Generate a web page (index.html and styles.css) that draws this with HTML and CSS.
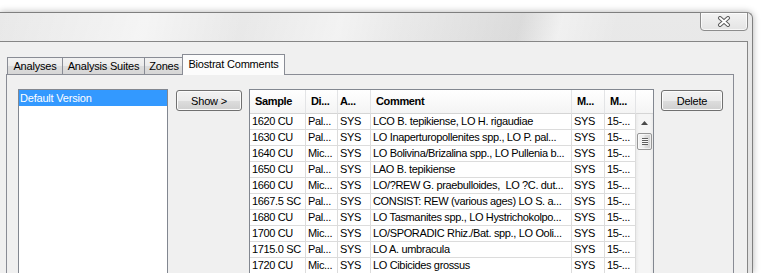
FILE: index.html
```html
<!DOCTYPE html>
<html lang="en">
  <head>
    <meta charset="UTF-8" />
    <title>Biostrat Comments</title>
    <link rel="stylesheet" href="styles.css">
  </head>
  <body>
    <div class="desktop">
      <div class="window">
        <div class="titlebar">
          <button class="close-btn" type="button">
            <svg width="14" height="11" viewBox="0 0 14 11">
              <path d="M3 2 L11 9 M11 2 L3 9" stroke="#5c5c5c" stroke-width="4" stroke-linecap="round" fill="none"/>
              <path d="M3 2 L11 9 M11 2 L3 9" stroke="#ffffff" stroke-width="2" stroke-linecap="round" fill="none"/>
            </svg>
          </button>
        </div>

        <div class="client">
          <div class="tab-strip">
            <span class="tab tab-analyses">Analyses</span>
            <span class="tab tab-suites">Analysis Suites</span>
            <span class="tab tab-zones">Zones</span>
            <span class="tab tab-comments active">Biostrat Comments</span>
          </div>

          <div class="tab-pane">
            <div class="version-list">
              <div class="list-item selected">Default Version</div>
            </div>

            <button class="btn show-btn" type="button">Show &gt;</button>

            <div class="grid-box">
              <div class="grid">
                <div class="th">Sample</div>
                <div class="th">Di...</div>
                <div class="th th-tight">A...</div>
                <div class="th">Comment</div>
                <div class="th">M...</div>
                <div class="th">M...</div>

                <div class="td">1620 CU</div><div class="td">Pal...</div><div class="td">SYS</div><div class="td">LCO B. tepikiense, LO H. rigaudiae</div><div class="td">SYS</div><div class="td">15-...</div>
                <div class="td">1630 CU</div><div class="td">Pal...</div><div class="td">SYS</div><div class="td">LO Inaperturopollenites spp., LO P. pal...</div><div class="td">SYS</div><div class="td">15-...</div>
                <div class="td">1640 CU</div><div class="td">Mic...</div><div class="td">SYS</div><div class="td">LO Bolivina/Brizalina spp., LO Pullenia b...</div><div class="td">SYS</div><div class="td">15-...</div>
                <div class="td">1650 CU</div><div class="td">Pal...</div><div class="td">SYS</div><div class="td">LAO B. tepikiense</div><div class="td">SYS</div><div class="td">15-...</div>
                <div class="td">1660 CU</div><div class="td">Mic...</div><div class="td">SYS</div><div class="td">LO/?REW G. praebulloides,&nbsp; LO ?C. dut...</div><div class="td">SYS</div><div class="td">15-...</div>
                <div class="td">1667.5 SC</div><div class="td">Pal...</div><div class="td">SYS</div><div class="td">CONSIST: REW (various ages) LO S. a...</div><div class="td">SYS</div><div class="td">15-...</div>
                <div class="td">1680 CU</div><div class="td">Pal...</div><div class="td">SYS</div><div class="td">LO Tasmanites spp., LO Hystrichokolpo...</div><div class="td">SYS</div><div class="td">15-...</div>
                <div class="td">1700 CU</div><div class="td">Mic...</div><div class="td">SYS</div><div class="td">LO/SPORADIC Rhiz./Bat. spp., LO Ooli...</div><div class="td">SYS</div><div class="td">15-...</div>
                <div class="td">1715.0 SC</div><div class="td">Pal...</div><div class="td">SYS</div><div class="td">LO A. umbracula</div><div class="td">SYS</div><div class="td">15-...</div>
                <div class="td">1720 CU</div><div class="td">Mic...</div><div class="td">SYS</div><div class="td">LO Cibicides grossus</div><div class="td">SYS</div><div class="td">15-...</div>
              </div>

              <div class="scroll-side">
                <div class="corner"></div>
                <div class="scrollbar">
                  <div class="arrow-up">
                    <svg width="7" height="4" viewBox="0 0 7 4"><polygon points="0,4 3.5,0 7,4" fill="#4a4a4a"/></svg>
                  </div>
                  <div class="thumb"><span class="grip"></span></div>
                </div>
              </div>
            </div>

            <button class="btn delete-btn" type="button">Delete</button>
          </div>
        </div>
      </div>
    </div>
  </body>
</html>
```

FILE: styles.css
```css
* {
  box-sizing: border-box;
}

html, body {
  margin: 0;
  height: 100%;
}

body {
  background: #fff;
  font-family: "Liberation Sans", Arial, sans-serif;
  font-size: 11px;
  letter-spacing: -0.2px;
  color: #000;
  overflow: hidden;
}

/* page area around the dialog, window sits 12px down and stops 15px from the right */
.desktop {
  height: 273px;
  padding: 12px 15px 0 0;
}

.window {
  height: 100%;
  display: flex;
  flex-direction: column;
  padding-right: 4px;
  border-top: 1px solid #7f7f7f;
  border-right: 1px solid #7f7f7f;
  border-top-right-radius: 6px;
  box-shadow: 0 0 7px rgba(0, 0, 0, 0.3);
  background:
    linear-gradient(104deg, rgba(255,255,255,0) 0%, rgba(255,255,255,0.55) 18%, rgba(255,255,255,0) 30%,
      rgba(255,255,255,0.45) 42%, rgba(0,0,0,0) 50%, rgba(0,0,0,0.06) 64%, rgba(255,255,255,0.35) 69%, rgba(0,0,0,0) 76%),
    linear-gradient(#e9e9e9, #e2e2e2);
}

.titlebar {
  flex: none;
  height: 28px;
  display: flex;
  justify-content: flex-end;
}

.close-btn {
  width: 48px;
  height: 19px;
  margin-top: -1px;
  padding: 0;
  display: flex;
  align-items: center;
  justify-content: center;
  border: 1px solid #8c8c8c;
  border-radius: 0 0 4px 4px;
  background: linear-gradient(#f3f3f3, #e4e4e4);
  box-shadow: inset 0 0 0 1px rgba(255, 255, 255, 0.7);
}

.client {
  flex: 1;
  min-height: 0;
  display: flex;
  flex-direction: column;
  border-top: 1px solid #868686;
  border-right: 1px solid #868686;
  background: #f0f0f0;
}

/* tabs */
.tab-strip {
  flex: none;
  height: 20px;
  margin: 12px 0 0 7px;
  display: flex;
  align-items: flex-end;
}

.tab {
  height: 17px;
  margin-left: -1px;
  line-height: 16px;
  text-align: center;
  white-space: nowrap;
  border: 1px solid #898c95;
  border-bottom: none;
  background: linear-gradient(#f2f2f2, #ebebeb 50%, #dddddd 51%, #d6d6d6);
}

.tab-analyses { width: 56px; margin-left: 0; }
.tab-suites { width: 83px; }
.tab-zones { width: 40px; }

.tab.active {
  position: relative;
  z-index: 1;
  width: 103px;
  height: 21px;
  margin-left: -2px;
  margin-bottom: -1px;
  padding-top: 1px;
  background: #fcfcfc;
}

.tab-pane {
  flex: none;
  height: 320px;
  margin: 0 13px 0 6px;
  padding: 14px 0 0 11px;
  display: flex;
  align-items: flex-start;
  border: 1px solid #898c95;
  background: #f0f0f0;
}

.version-list {
  width: 150px;
  height: 300px;
  border: 1px solid #828790;
  background: #fff;
}

.list-item {
  height: 16px;
  line-height: 16px;
  padding-left: 1px;
}

.list-item.selected {
  background: #3399ff;
  color: #fff;
}

/* windows 7 style push buttons */
.btn {
  height: 21px;
  margin-top: 1px;
  padding: 0;
  font: inherit;
  letter-spacing: inherit;
  color: #000;
  border: 1px solid #707070;
  border-radius: 3px;
  background: linear-gradient(#f2f2f2, #ebebeb 50%, #dddddd 51%, #cfcfcf);
  box-shadow: inset 0 0 0 1px #fbfbfb;
}

.show-btn {
  width: 66px;
  margin-left: 8px;
}

.delete-btn {
  width: 62px;
  margin-left: 7px;
}

/* table */
.grid-box {
  width: 405px;
  height: 300px;
  margin-left: 7px;
  display: flex;
  border: 1px solid #828790;
  background: #fff;
}

.grid {
  width: 386px;
  display: grid;
  grid-template-columns: 56px 32px 33px 201px 33px 31px;
  grid-template-rows: 24px;
  grid-auto-rows: 16px;
  letter-spacing: -0.35px;
}

.th {
  padding-left: 5px;
  line-height: 23px;
  font-weight: bold;
  white-space: nowrap;
  overflow: hidden;
  border-right: 1px solid #e3e4e6;
  border-bottom: 1px solid #d5d5d5;
  background: linear-gradient(#ffffff, #f4f4f4);
}

.th-tight {
  padding-left: 2px;
}

.td {
  padding-left: 2px;
  line-height: 15px;
  white-space: nowrap;
  overflow: hidden;
  border-right: 1px solid #dcdcdc;
  border-bottom: 1px solid #dcdcdc;
}

.scroll-side {
  width: 17px;
  display: flex;
  flex-direction: column;
}

.corner {
  height: 24px;
  border-bottom: 1px solid #d5d5d5;
  background: linear-gradient(#ffffff, #f4f4f4);
}

.scrollbar {
  flex: 1;
  background: linear-gradient(to right, #ebebeb, #f5f5f5 3px, #f5f5f5 14px, #ebebeb);
}

.arrow-up {
  height: 17px;
  display: flex;
  align-items: center;
  justify-content: center;
}

.thumb {
  width: 15px;
  height: 17px;
  margin: 2px 0 0 1px;
  display: flex;
  align-items: center;
  justify-content: center;
  border: 1px solid #979797;
  border-radius: 2px;
  background: linear-gradient(to right, #f4f4f4, #ececec 45%, #dedede 55%, #d4d4d4);
  box-shadow: inset 0 0 0 1px rgba(255, 255, 255, 0.6);
}

.grip {
  width: 6px;
  height: 7px;
  background: repeating-linear-gradient(#5e5e5e 0 1px, #fafafa 1px 2px);
}
```
